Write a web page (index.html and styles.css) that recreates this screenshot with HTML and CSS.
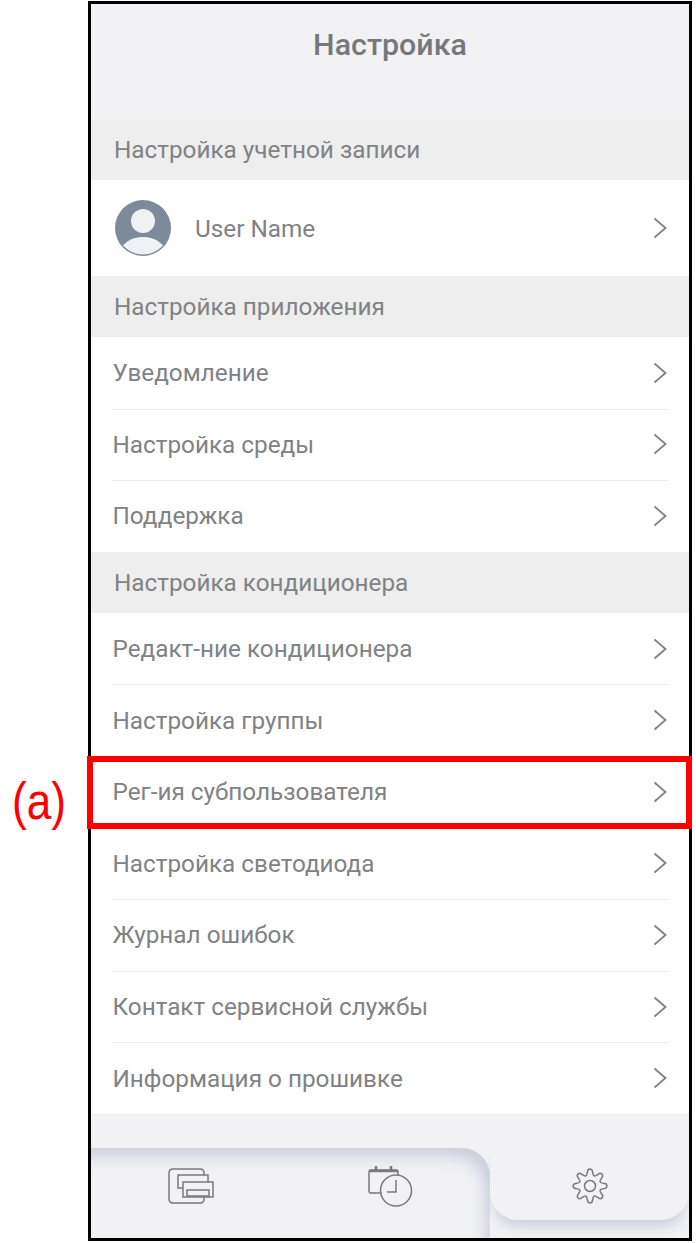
FILE: index.html
```html
<!DOCTYPE html>
<html lang="en">
<head>
    <meta charset="UTF-8">
    <meta name="viewport" content="width=device-width, initial-scale=1.0">
    <title>Настройка</title>
    <link rel="stylesheet" href="styles.css">
</head>
<body>
    <div class="page">
        <div class="callout-col">
            <span class="callout">(a)</span>
        </div>
        <div class="phone">
            <header class="title-bar">Настройка</header>

            <div class="section-head">Настройка учетной записи</div>
            <div class="user-row">
                <svg class="avatar" viewBox="0 0 56 56">
                    <defs><clipPath id="avatarClip"><circle cx="28" cy="28" r="26.500"/></clipPath></defs>
                    <circle cx="28" cy="28" r="28" fill="#7d8a9c"/>
                    <g clip-path="url(#avatarClip)" fill="#eff1f3">
                        <circle cx="28" cy="21" r="12"/>
                        <ellipse cx="28" cy="54" rx="23" ry="17"/>
                    </g>
                </svg>
                <span class="row-text">User Name</span>
                <svg class="chevron" viewBox="0 0 14 22"><path d="M1.5 1.5 12.5 11 1.5 20.5"/></svg>
            </div>

            <div class="section-head">Настройка приложения</div>
            <div class="row"><span class="row-text">Уведомление</span><svg class="chevron" viewBox="0 0 14 22"><path d="M1.5 1.5 12.5 11 1.5 20.5"/></svg></div>
            <div class="row"><span class="row-text">Настройка среды</span><svg class="chevron" viewBox="0 0 14 22"><path d="M1.5 1.5 12.5 11 1.5 20.5"/></svg></div>
            <div class="row row-last"><span class="row-text">Поддержка</span><svg class="chevron" viewBox="0 0 14 22"><path d="M1.5 1.5 12.5 11 1.5 20.5"/></svg></div>

            <div class="section-head">Настройка кондиционера</div>
            <div class="row"><span class="row-text">Редакт-ние кондиционера</span><svg class="chevron" viewBox="0 0 14 22"><path d="M1.5 1.5 12.5 11 1.5 20.5"/></svg></div>
            <div class="row"><span class="row-text">Настройка группы</span><svg class="chevron" viewBox="0 0 14 22"><path d="M1.5 1.5 12.5 11 1.5 20.5"/></svg></div>
            <div class="row row-marked"><span class="row-text">Рег-ия субпользователя</span><svg class="chevron" viewBox="0 0 14 22"><path d="M1.5 1.5 12.5 11 1.5 20.5"/></svg></div>
            <div class="row"><span class="row-text">Настройка светодиода</span><svg class="chevron" viewBox="0 0 14 22"><path d="M1.5 1.5 12.5 11 1.5 20.5"/></svg></div>
            <div class="row"><span class="row-text">Журнал ошибок</span><svg class="chevron" viewBox="0 0 14 22"><path d="M1.5 1.5 12.5 11 1.5 20.5"/></svg></div>
            <div class="row"><span class="row-text">Контакт сервисной службы</span><svg class="chevron" viewBox="0 0 14 22"><path d="M1.5 1.5 12.5 11 1.5 20.5"/></svg></div>
            <div class="row row-last"><span class="row-text">Информация о прошивке</span><svg class="chevron" viewBox="0 0 14 22"><path d="M1.5 1.5 12.5 11 1.5 20.5"/></svg></div>

            <footer class="footer">
                <div class="tabs-left">
                    <div class="tab">
                        <svg class="tab-icon icon-units" viewBox="0 0 46 36">
                            <path d="M36 7V4.500a3.500 3.500 0 0 0-3.500-3.500H4.500A3.500 3.500 0 0 0 1 4.500v27A3.500 3.500 0 0 0 4.500 35h28a3.500 3.500 0 0 0 3.500-3.500V29"/>
                            <rect x="10" y="7" width="30" height="13"/>
                            <rect class="icon-fill" x="15" y="14" width="30" height="15"/>
                            <rect x="19" y="22" width="22" height="6"/>
                        </svg>
                    </div>
                    <div class="tab">
                        <svg class="tab-icon icon-schedule" viewBox="0 0 46 42">
                            <path d="M14.500 28H4a2 2 0 0 1-2-2V7a2 2 0 0 1 2-2h25a2 2 0 0 1 2 2v3"/>
                            <path d="M2 6h29" stroke-width="2.500"/>
                            <path d="M9 1v5M24 1v5" stroke-width="2.500"/>
                            <circle cx="29" cy="25.500" r="15.500"/>
                            <path d="M29 15v12H20"/>
                        </svg>
                    </div>
                </div>
                <div class="tab-active">
                    <svg class="tab-icon icon-gear" viewBox="0 0 36 36">
                        <defs>
                            <path id="gearTooth" d="M14.600 7 15.600 3.500A2.400 2.400 0 0 1 20.400 3.500L21.400 7A1.500 1.500 0 0 0 23.370 7.820"/>
                        </defs>
                        <circle cx="18" cy="18" r="5.500"/>
                        <use href="#gearTooth"/>
                        <use href="#gearTooth" transform="rotate(45 18 18)"/>
                        <use href="#gearTooth" transform="rotate(90 18 18)"/>
                        <use href="#gearTooth" transform="rotate(135 18 18)"/>
                        <use href="#gearTooth" transform="rotate(180 18 18)"/>
                        <use href="#gearTooth" transform="rotate(225 18 18)"/>
                        <use href="#gearTooth" transform="rotate(270 18 18)"/>
                        <use href="#gearTooth" transform="rotate(315 18 18)"/>
                    </svg>
                </div>
            </footer>
        </div>
    </div>
</body>
</html>
```

FILE: styles.css
```css
body {
    margin: 0;
    background-color: #ffffff;
    font-family: Roboto, "Noto Sans", Arial, sans-serif;
}

.page {
    display: flex;
    padding-top: 1px;
}

.callout-col {
    width: 88px;
    height: 1240px;
    box-sizing: border-box;
    padding-top: 767px;
}

.callout {
    display: block;
    width: 88px;
    text-align: center;
    color: #ff0000;
    font-family: "Liberation Sans", Arial, sans-serif;
    font-size: 52px;
    line-height: 66px;
    transform: translateX(-5px) scaleX(0.85);
}

.phone {
    width: 604px;
    height: 1240px;
    box-sizing: border-box;
    border: 3px solid #000000;
    display: flex;
    flex-direction: column;
    background-color: #f2f2f5;
}

.title-bar {
    flex-shrink: 0;
    height: 115px;
    box-sizing: border-box;
    padding-top: 21px;
    text-align: center;
    font-size: 30.400px;
    line-height: 40px;
    font-weight: 500;
    color: #76797b;
}

.section-head {
    flex-shrink: 0;
    height: 61px;
    display: flex;
    align-items: center;
    padding-left: 23px;
    background-color: #eeeeee;
    color: #808285;
    font-size: 24.300px;
}

.user-row {
    flex-shrink: 0;
    height: 96px;
    display: flex;
    align-items: center;
    padding: 0 22px 0 24px;
    background-color: #ffffff;
}

.avatar {
    width: 56px;
    height: 56px;
    margin-right: 24px;
}

.row {
    flex-shrink: 0;
    height: 71.600px;
    padding: 0 22px 0 21.500px;
    box-sizing: border-box;
    display: flex;
    align-items: center;
    background-color: #ffffff;
    position: relative;
}

.row::before {
    content: "";
    position: absolute;
    left: 21px;
    right: 21px;
    bottom: -1px;
    height: 1px;
    background-color: #ececec;
    z-index: 1;
}

.row-last::before {
    display: none;
}

.row-marked::before {
    display: none;
}

.row-marked::after {
    content: "";
    position: absolute;
    top: 0;
    bottom: -1px;
    left: -4px;
    right: -3px;
    border: 6px solid #ff0000;
    z-index: 2;
}

.row-text {
    flex-grow: 1;
    color: #808285;
    font-size: 24.300px;
}

.chevron {
    width: 14px;
    height: 22px;
    fill: none;
    stroke: #808285;
    stroke-width: 1.800;
}

.footer {
    flex-grow: 1;
    min-height: 0;
    display: flex;
    align-items: flex-start;
    padding-top: 33px;
    border-top: 1px solid #ececec;
    overflow: hidden;
}

.tabs-left {
    width: 399px;
    height: 100px;
    display: flex;
    padding-top: 4px;
    box-sizing: border-box;
    border-top-right-radius: 28px;
    box-shadow: inset -10px 14px 16px -6px #c9cddb;
}

.tab {
    flex: 1;
    display: flex;
    justify-content: center;
    height: 68px;
    align-items: center;
}

.tab-active {
    width: 199px;
    height: 72px;
    display: flex;
    justify-content: center;
    align-items: center;
    padding-top: 4px;
    box-sizing: border-box;
    background-color: #f2f2f5;
    border-radius: 0 0 28px 28px;
    box-shadow: 0 10px 14px -4px #c9cddb;
}

.tab-icon {
    fill: none;
    stroke: #77797c;
    stroke-width: 1.500;
}

.icon-fill {
    fill: #f2f2f5;
}

.icon-units {
    width: 46px;
    height: 36px;
}

.icon-schedule {
    width: 46px;
    height: 42px;
}

.icon-gear {
    width: 36px;
    height: 36px;
}
```
